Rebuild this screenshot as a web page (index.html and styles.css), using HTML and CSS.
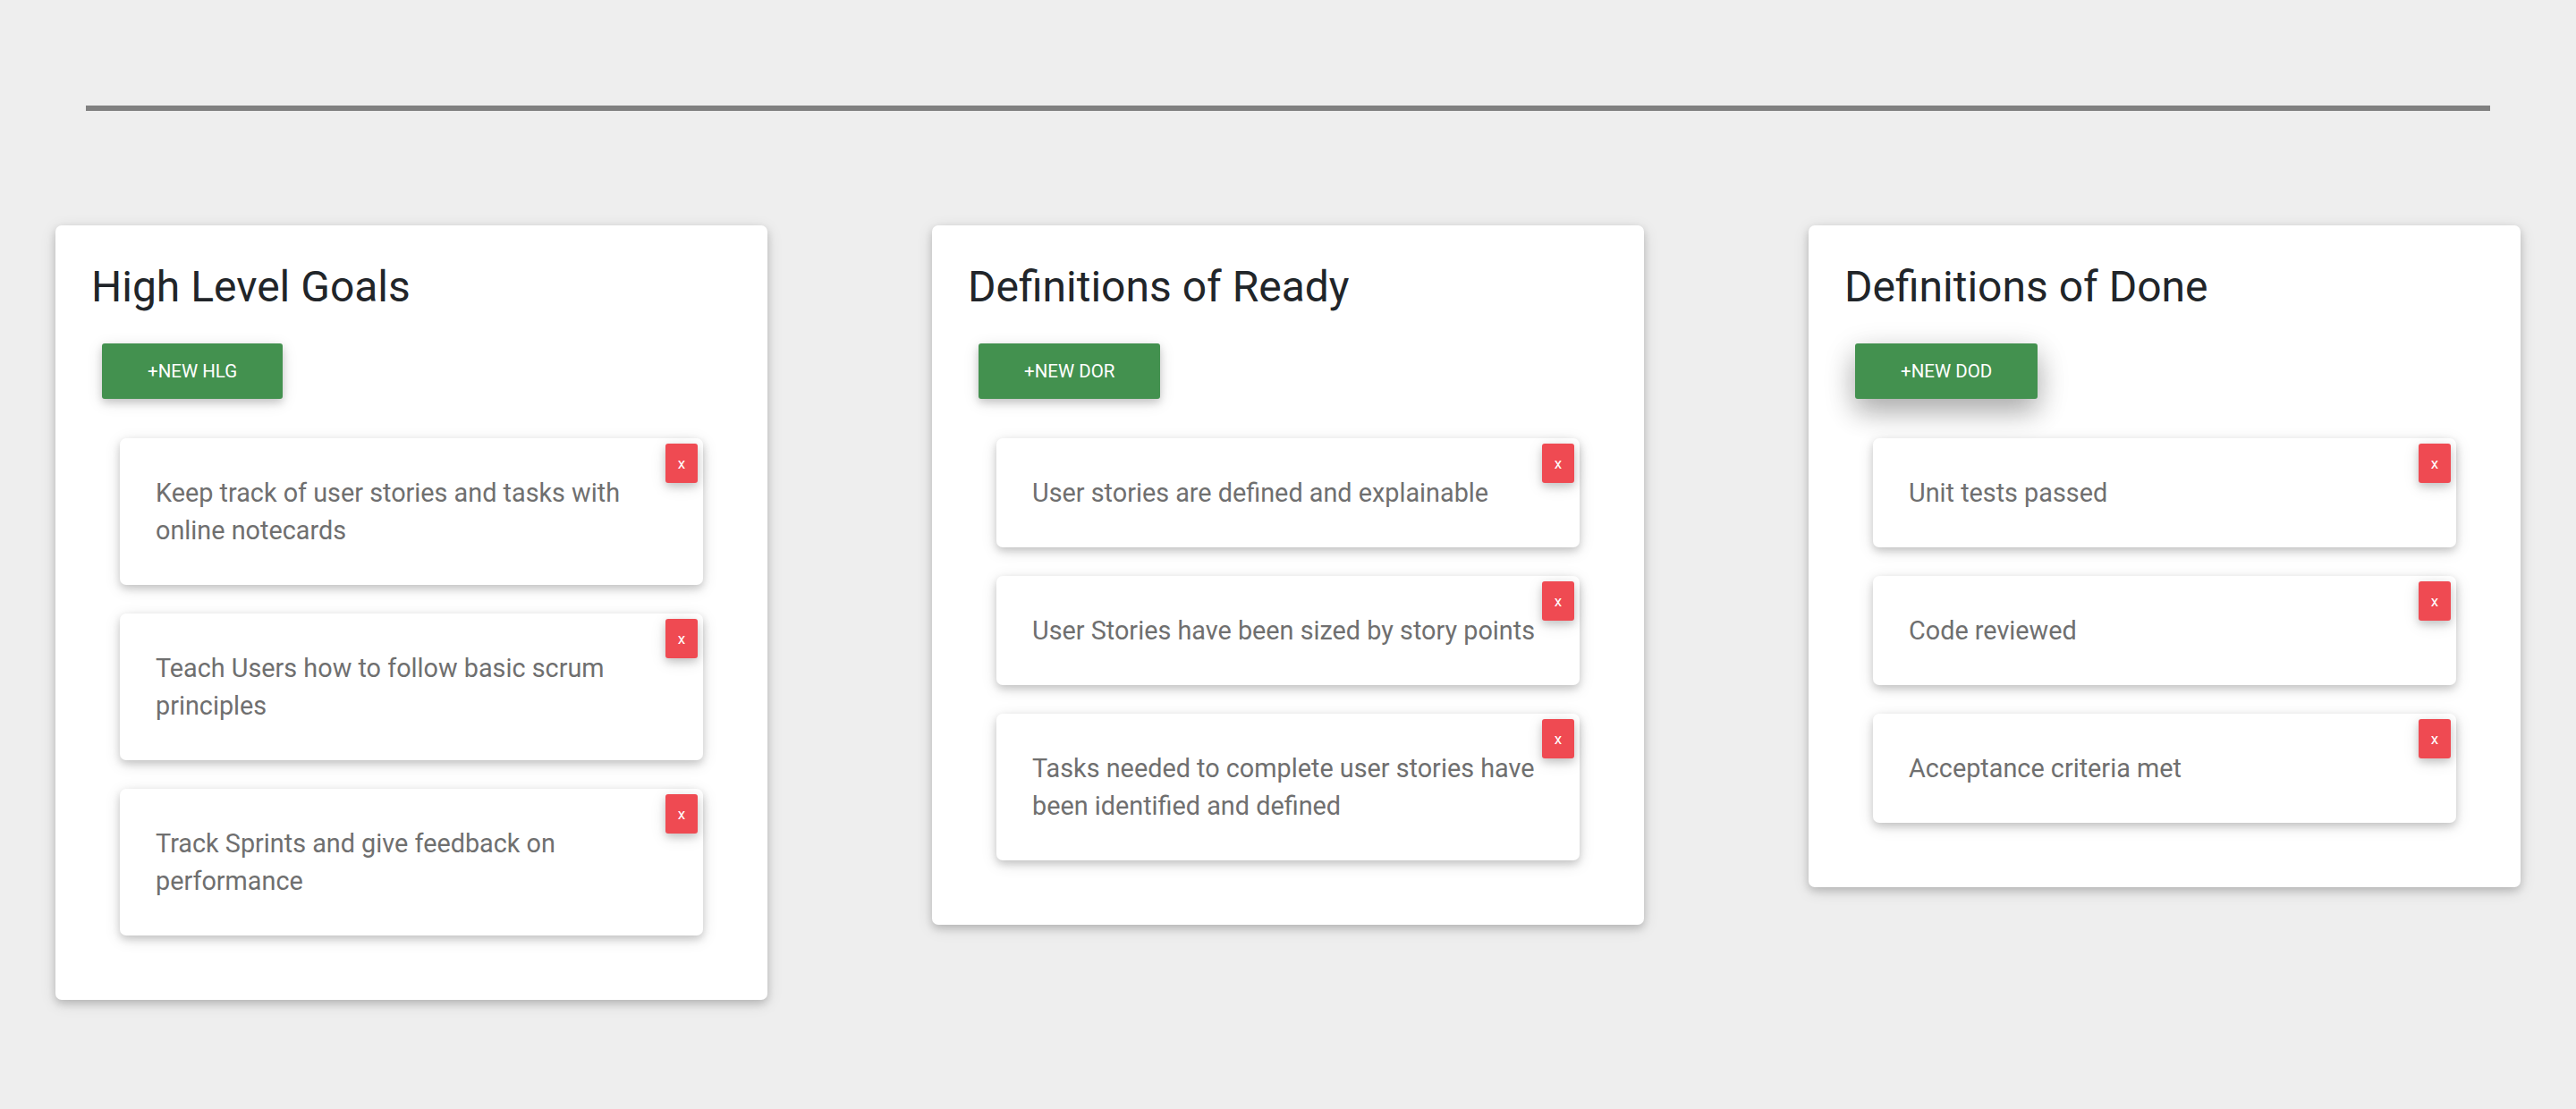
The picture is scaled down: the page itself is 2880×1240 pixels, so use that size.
FILE: index.html
```html
<!DOCTYPE html>
<html lang="en">
<head>
<meta charset="utf-8">
<title>Scrum Board</title>
<link rel="stylesheet" href="styles.css">
</head>
<body>
<div class="page">
  <div class="divider"></div>
  <div class="board">
    <section class="panel">
      <h2 class="panel-title">High Level Goals</h2>
      <button class="btn-new">+New HLG</button>
      <ul class="items">
        <li class="item"><p class="item-text">Keep track of user stories and tasks with online notecards</p><button class="btn-close">x</button></li>
        <li class="item"><p class="item-text">Teach Users how to follow basic scrum principles</p><button class="btn-close">x</button></li>
        <li class="item"><p class="item-text">Track Sprints and give feedback on performance</p><button class="btn-close">x</button></li>
      </ul>
    </section>
    <section class="panel">
      <h2 class="panel-title">Definitions of Ready</h2>
      <button class="btn-new">+New DOR</button>
      <ul class="items">
        <li class="item"><p class="item-text">User stories are defined and explainable</p><button class="btn-close">x</button></li>
        <li class="item"><p class="item-text">User Stories have been sized by story points</p><button class="btn-close">x</button></li>
        <li class="item"><p class="item-text">Tasks needed to complete user stories have been identified and defined</p><button class="btn-close">x</button></li>
      </ul>
    </section>
    <section class="panel">
      <h2 class="panel-title">Definitions of Done</h2>
      <button class="btn-new btn-hover">+New DOD</button>
      <ul class="items">
        <li class="item"><p class="item-text">Unit tests passed</p><button class="btn-close">x</button></li>
        <li class="item"><p class="item-text">Code reviewed</p><button class="btn-close">x</button></li>
        <li class="item"><p class="item-text">Acceptance criteria met</p><button class="btn-close">x</button></li>
      </ul>
    </section>
  </div>
</div>
</body>
</html>
```
FILE: styles.css
```css
html, body {
  margin: 0;
  padding: 0;
  background: #eeeeee;
}

body {
  min-height: 1240px;
  font-family: Roboto, "Liberation Sans", Arial, sans-serif;
}

.page {
  padding-top: 118px;
}

.divider {
  height: 6px;
  background: #808080;
  margin: 0 96px;
}

.board {
  display: flex;
  align-items: flex-start;
  justify-content: space-between;
  padding: 0 62px;
  margin-top: 128px;
}

.panel {
  box-sizing: border-box;
  width: 796px;
  background: #ffffff;
  border-radius: 7px;
  padding: 40px;
  box-shadow: 0 4px 9px 0 rgba(0, 0, 0, 0.16), 0 4px 18px 0 rgba(0, 0, 0, 0.12);
}

.panel-title {
  margin: 0 0 34px 0;
  font-size: 48px;
  line-height: 57.6px;
  font-weight: 400;
  color: #212529;
}

.btn-new {
  display: block;
  box-sizing: border-box;
  height: 62px;
  margin: 0 0 44px 12px;
  padding: 0 51px;
  border: 0;
  border-radius: 3px;
  background: #43914f;
  color: #ffffff;
  font-family: Roboto, "Liberation Sans", Arial, sans-serif;
  font-size: 20.5px;
  font-weight: 400;
  text-transform: uppercase;
  box-shadow: 0 4px 9px 0 rgba(0, 0, 0, 0.16), 0 4px 18px 0 rgba(0, 0, 0, 0.12);
}

.btn-hover {
  box-shadow: 0 14px 30px 0 rgba(0, 0, 0, 0.2), 0 11px 36px 0 rgba(0, 0, 0, 0.19);
}

.items {
  list-style: none;
  margin: 0 32px;
  padding: 0;
}

.item {
  position: relative;
  background: #ffffff;
  border-radius: 7px;
  padding: 40px 30px 40px 40px;
  margin-bottom: 32px;
  box-shadow: 0 4px 9px 0 rgba(0, 0, 0, 0.16), 0 4px 18px 0 rgba(0, 0, 0, 0.12);
}

.item-text {
  margin: 0;
  font-size: 28.8px;
  line-height: 42px;
  font-weight: 400;
  color: #6f6f6f;
}

.btn-close {
  position: absolute;
  top: 6px;
  right: 6px;
  width: 36px;
  height: 44px;
  padding: 0;
  border: 0;
  border-radius: 3px;
  background: #ef4a52;
  color: #ffffff;
  font-family: Roboto, "Liberation Sans", Arial, sans-serif;
  font-size: 17px;
  line-height: 44px;
  box-shadow: 0 4px 9px 0 rgba(0, 0, 0, 0.16), 0 4px 18px 0 rgba(0, 0, 0, 0.12);
}
```
